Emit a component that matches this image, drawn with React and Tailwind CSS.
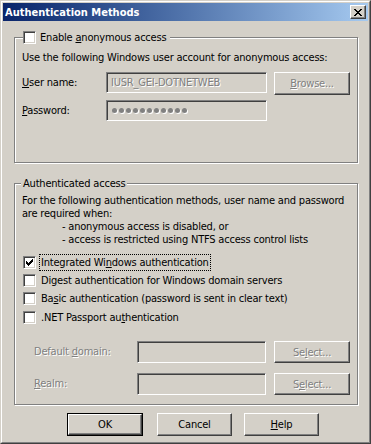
const raised =
  'border border-t-white border-l-white border-r-[#404040] border-b-[#404040] shadow-[inset_-1px_-1px_0_#808080]';
const sunken =
  'border border-t-[#808080] border-l-[#808080] border-r-white border-b-white shadow-[inset_1px_1px_0_#404040,inset_-1px_-1px_0_#D4D0C8]';
const etched = 'border border-[#808080] shadow-[inset_1px_1px_0_#fff,1px_1px_0_#fff]';
const dim = 'text-[#808080] [text-shadow:1px_1px_0_#fff]';

const Checkbox = ({ checked }) => (
  <div className={`w-[13px] h-[13px] shrink-0 bg-white ${sunken}`}>
    {checked && (
      <svg width="11" height="11" viewBox="0 0 11 11" shapeRendering="crispEdges">
        <path
          fill="#000"
          d="M2 4h1v3H2z M3 5h1v3H3z M4 6h1v3H4z M5 5h1v3H5z M6 4h1v3H6z M7 3h1v3H7z M8 2h1v3H8z"
        />
      </svg>
    )}
  </div>
);

const Button = ({ children, disabled, width = 'w-[76px]', height = 'h-[23px]' }) => (
  <div className={`${width} ${height} flex items-center justify-center ${raised} ${disabled ? dim : 'text-black'}`}>
    {children}
  </div>
);

const Option = ({ checked, focused, children }) => (
  <div className="flex items-center h-[18px]">
    <div className="ml-[1px]">
      <Checkbox checked={checked} />
    </div>
    <span
      className={`ml-[3px] px-[1px] leading-[15px] border border-dotted ${focused ? 'border-black' : 'border-transparent'}`}
    >
      {children}
    </span>
  </div>
);

const App = () => {
  return (
    <div
      className="w-[371px] h-[444px] bg-[#D4D0C8] border border-t-[#D4D0C8] border-l-[#D4D0C8] border-r-[#404040] border-b-[#404040] text-[11px] leading-[13px] tracking-[-0.2px] text-black overflow-hidden"
      style={{ fontFamily: '"DejaVu Sans Condensed", "Liberation Sans", sans-serif' }}
    >
      <div className="h-full border border-t-white border-l-white border-r-[#808080] border-b-[#808080] p-[1px] flex flex-col">
        {/* Title bar */}
        <div className="h-[18px] shrink-0 flex items-center justify-between pl-[2px] pr-[2px] bg-gradient-to-r from-[#0A246A] to-[#A6CAF0]">
          <span className="text-white font-bold text-[11px] tracking-normal">Authentication Methods</span>
          <div className={`w-[16px] h-[14px] bg-[#D4D0C8] flex items-center justify-center ${raised}`}>
            <svg width="8" height="7" viewBox="0 0 8 7" shapeRendering="crispEdges">
              <path
                fill="#000"
                d="M0 0h2v1H0z M6 0h2v1H6z M1 1h2v1H1z M5 1h2v1H5z M2 2h4v1H2z M3 3h2v1H3z M2 4h4v1H2z M1 5h2v1H1z M5 5h2v1H5z M0 6h2v1H0z M6 6h2v1H6z"
              />
            </svg>
          </div>
        </div>

        <div className="pl-[11px] pr-[10px] flex flex-col">
          {/* Anonymous access group */}
          <div className={`relative mt-[16px] h-[126px] pl-[7px] pr-[4px] pt-[13px] ${etched}`}>
            <div className="absolute -top-[7px] left-[8px] flex items-center bg-[#D4D0C8] pr-[4px]">
              <Checkbox />
              <span className="ml-[4px]">
                Enable <u>a</u>nonymous access
              </span>
            </div>
            <div>Use the following Windows user account for anonymous access:</div>
            <div className="flex items-start mt-[8px] h-[23px]">
              <span className="w-[84px] leading-[21px]">
                <u>U</u>ser name:
              </span>
              <div className={`w-[161px] h-[21px] px-[4px] flex items-center ${sunken} ${dim}`}>
                IUSR_GEI-DOTNETWEB
              </div>
              <div className="ml-[7px]">
                <Button disabled>
                  <span>
                    <u>B</u>rowse...
                  </span>
                </Button>
              </div>
            </div>
            <div className="flex items-start mt-[5px]">
              <span className="w-[84px] leading-[21px]">
                <u>P</u>assword:
              </span>
              <div className={`w-[161px] h-[21px] px-[5px] flex items-center gap-[2px] ${sunken}`}>
                {Array.from({ length: 11 }).map((_, i) => (
                  <span key={i} className="w-[5px] h-[5px] rounded-full bg-[#808080] shadow-[1px_1px_0_#fff]" />
                ))}
              </div>
            </div>
          </div>

          {/* Authenticated access group */}
          <div className={`relative mt-[20px] h-[222px] pl-[7px] pr-[2px] pt-[10px] ${etched}`}>
            <span className="absolute -top-[7px] left-[6px] bg-[#D4D0C8] px-[2px]">Authenticated access</span>
            <div className="whitespace-nowrap">For the following authentication methods, user name and password</div>
            <div>are required when:</div>
            <div className="pl-[40px]">- anonymous access is disabled, or</div>
            <div className="pl-[40px]">- access is restricted using NTFS access control lists</div>

            <div className="mt-[7px] flex flex-col">
              <Option checked focused>
                Integrated Wi<u>n</u>dows authentication
              </Option>
              <Option>
                Di<u>g</u>est authentication for Windows domain servers
              </Option>
              <Option>
                Ba<u>s</u>ic authentication (password is sent in clear text)
              </Option>
              <div className="mt-[1px]">
                <Option>
                  .NET Passport au<u>t</u>hentication
                </Option>
              </div>
            </div>

            <div className="flex items-start mt-[15px]">
              <span className={`ml-[12px] w-[103px] leading-[22px] ${dim}`}>
                Default <u>d</u>omain:
              </span>
              <div className={`w-[129px] h-[22px] ${sunken}`} />
              <div className="ml-[8px]">
                <Button disabled height="h-[22px]">
                  <span>
                    Se<u>l</u>ect...
                  </span>
                </Button>
              </div>
            </div>
            <div className="flex items-start mt-[10px]">
              <span className={`ml-[12px] w-[103px] leading-[22px] ${dim}`}>
                <u>R</u>ealm:
              </span>
              <div className={`w-[129px] h-[22px] ${sunken}`} />
              <div className="ml-[8px]">
                <Button disabled height="h-[22px]">
                  <span>
                    S<u>e</u>lect...
                  </span>
                </Button>
              </div>
            </div>
          </div>

          {/* Dialog buttons */}
          <div className="flex mt-[8px] pl-[53px]">
            <div className="border border-black">
              <Button width="w-[74px]" height="h-[21px]">OK</Button>
            </div>
            <div className="ml-[14px]">
              <Button width="w-[75px]">Cancel</Button>
            </div>
            <div className="ml-[12px]">
              <Button width="w-[75px]">
                <span>
                  <u>H</u>elp
                </span>
              </Button>
            </div>
          </div>
        </div>
      </div>
    </div>
  );
};

export default App;
